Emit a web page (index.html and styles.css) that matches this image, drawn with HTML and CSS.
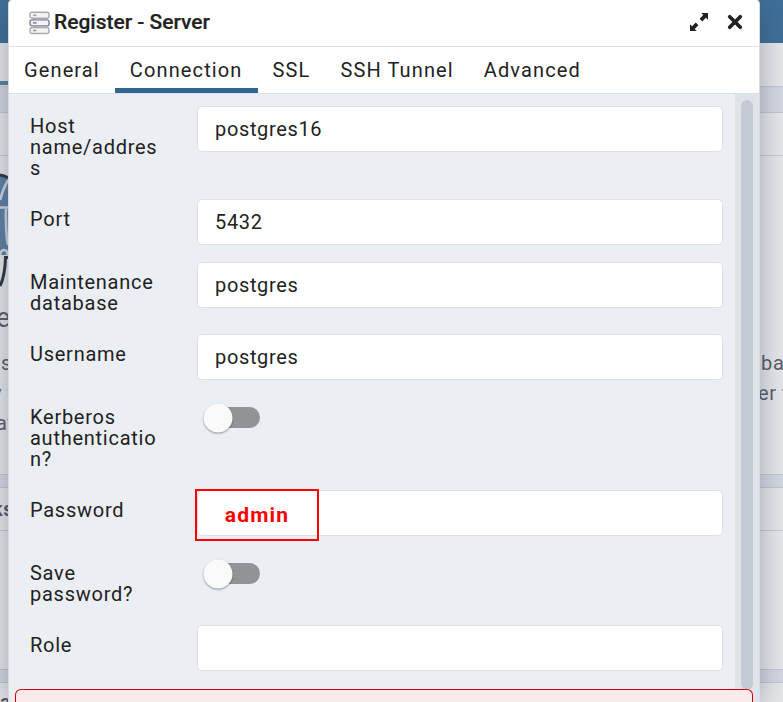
FILE: index.html
```
<!DOCTYPE html>
<html lang="en">
<head>
<meta charset="utf-8">
<title>Register - Server</title>
<link rel="stylesheet" href="styles.css">
</head>
<body>
<div class="page">
  <div class="topbar"></div>
  <div class="page-tabs"><span class="page-tab"></span></div>
  <div class="band band-tall"></div>
  <div class="panel-title"></div>
  <div class="panel welcome">
    <div class="side">
      <svg class="elephant" width="8" height="122" viewBox="0 0 8 122">
        <path d="M0 3Q5 3 8 6V82H0Z" fill="#5d81a3"/>
        <path d="M0 2Q5 2.500 8 5" fill="none" stroke="#30343e" stroke-width="3"/>
        <path d="M8 7Q3 16 0 27M0 34.500H8M6 36Q5.500 60 8 72M0 82Q1 77 4 77Q8 77 7 82" fill="none" stroke="#d0d6e2" stroke-width="2.600"/>
        <path d="M8 84.500H5.500Q5 103 0 113" fill="none" stroke="#30343e" stroke-width="3"/>
      </svg>
      <p class="big">e</p>
      <p class="copy">s</p>
      <p class="copy wide">y t</p>
      <p class="copy at">at</p>
    </div>
    <div class="side side-right">
      <p class="copy">ba</p>
      <p class="copy er">er t</p>
    </div>
  </div>
  <div class="band"></div>
  <div class="panel-title"><b class="ks">ks</b></div>
  <div class="panel links"></div>
  <div class="band"></div>
  <div class="panel-title last-title"><b class="last">a</b></div>
</div>

<div class="dialog">
  <header class="header">
    <svg class="server" width="22" height="24" viewBox="0 0 22 24">
      <g fill="#f3f3f3" stroke="#aaa" stroke-width="1.4">
        <rect x="1" y="1.2" width="19" height="6" rx="2"/>
        <rect x="1" y="16.5" width="19" height="6" rx="2"/>
        <rect x="1" y="8.9" width="19" height="6" rx="2" stroke="#7f7c9f"/>
      </g>
      <path d="M4 4.2h3.5M4 19.5h3.5" stroke="#999" stroke-width="1.3"/>
      <path d="M4 11.9h3.5" stroke="#68658c" stroke-width="1.3"/>
    </svg>
    <h1>Register - Server</h1>
    <svg class="expand" width="20" height="20" viewBox="0 0 20 20">
      <path d="M12.200 1H19V7.800L16.900 5.700L13.200 9.400L10.600 6.800L14.300 3.100ZM7.800 19H1V12.200L3.100 14.300L6.800 10.600L9.400 13.200L5.700 16.900Z" fill="#222"/>
    </svg>
    <svg class="close" width="16" height="16" viewBox="0 0 16 16"><path d="M2.7 2.7l10.6 10.6M13.3 2.7L2.7 13.3" stroke="#222" stroke-width="3.7" stroke-linecap="round"/></svg>
  </header>
  <nav class="tabs">
    <span class="tab">General</span>
    <span class="tab active">Connection</span>
    <span class="tab">SSL</span>
    <span class="tab">SSH Tunnel</span>
    <span class="tab">Advanced</span>
  </nav>
  <div class="body">
    <div class="form">
      <div class="row"><label>Host name/address</label><div class="field">postgres16</div></div>
      <div class="row"><label>Port</label><div class="field">5432</div></div>
      <div class="row"><label>Maintenance database</label><div class="field">postgres</div></div>
      <div class="row"><label>Username</label><div class="field">postgres</div></div>
      <div class="row"><label>Kerberos authentication?</label><div class="switch"><i></i></div></div>
      <div class="row"><label>Password</label><div class="field"><span class="mark">admin</span></div></div>
      <div class="row"><label>Save password?</label><div class="switch"><i></i></div></div>
      <div class="row"><label>Role</label><div class="field"></div></div>
    </div>
    <div class="scrollbar"><div class="thumb"></div></div>
  </div>
  <div class="alert"></div>
</div>
</body>
</html>
```
FILE: styles.css
```
* { box-sizing: border-box; }
html { height: 702px; overflow: hidden; }
body {
  margin: 0;
  height: 702px;
  overflow: hidden;
  position: relative;
  font: 20px/21px Roboto, sans-serif;
  letter-spacing: .65px;
  color: #222;
}
p, h1 { margin: 0; }

.page { height: 702px; overflow: hidden; background: #e6e8ea; }
.topbar { height: 43px; background: #3e7098; }
.page-tabs { height: 44px; border-bottom: 1px solid #c5c8d3; padding-top: 38px; }
.page-tab { display: block; width: 120px; height: 4px; background: #5682a5; }
.band { height: 14px; background: #d5d9e2; border: solid #c3c7d2; border-width: 1px 0; }
.band-tall { height: 26px; border-top: 0; }
.panel-title { height: 43px; border-bottom: 1px solid #c8ccd5; }
.last-title { height: 20px; border: 0; }
.panel { display: flex; justify-content: space-between; }
.welcome { height: 318px; }
.links { height: 138px; }
.side { width: 8px; color: #5a5e66; white-space: nowrap; }
.elephant { display: block; margin-top: 17px; }
.big { font-size: 27px; line-height: 46px; height: 53px; margin-left: -4px; }
.copy { line-height: 30px; height: 30px; margin-left: 1px; }
.copy.wide { margin-left: -8px; }
.copy.at { margin-left: -4px; }
.side-right { width: 23px; padding-top: 192px; }
.side-right .er { margin-left: -2px; }
.ks { display: block; margin-left: -8px; line-height: 42px; color: #555962; }
.last { display: block; line-height: 38px; color: #555962; }

.dialog {
  position: absolute;
  left: 8px;
  top: -1px;
  width: 752px;
  height: 703px;
  border: 1px solid #d8dbe3;
  border-bottom: 0;
  border-radius: 5px 5px 0 0;
  background: #ebeef3;
  background-clip: padding-box;
  box-shadow: 0 4px 30px rgba(50, 58, 82, .4);
}
.header {
  display: flex;
  align-items: center;
  height: 47px;
  padding: 0 16px 2px 20px;
  background: #fff;
  border-bottom: 1px solid #dde0e6;
  border-radius: 4px 4px 0 0;
}
.server { margin-top: 1px; }
h1 { font-size: 21px; font-weight: 500; letter-spacing: -.02px; margin-left: 3px; flex: 1; -webkit-text-stroke: .2px #222; }
.close { margin-left: 18px; }
.tabs { display: flex; height: 47px; background: #fff; border-bottom: 1px solid #dde0e6; }
.tab { padding: 13px 15px 0; border-bottom: 5px solid transparent; letter-spacing: 1.12px; }
.tab.active { border-color: #326690; }

.body { display: flex; height: 608px; overflow: hidden; }
.form { flex: 1; padding: 12px 12px 0 21px; }
.row { display: grid; grid-template-columns: 130px 526px; column-gap: 37px; align-items: start; margin-bottom: 17px; }
label { padding: 10px 0 3px; overflow-wrap: anywhere; letter-spacing: .74px; }
.field { height: 46px; padding: 12px 17px; background: #fff; border: 1px solid #dde0e6; border-radius: 5px; }
.mark {
  display: block;
  width: 124px;
  height: 52px;
  margin: -14px 0 0 -20px;
  border: 2px solid #f00;
  color: #f00;
  font-size: 21px;
  font-weight: 700;
  letter-spacing: 1.2px;
  line-height: 48px;
  text-align: center;
}
.switch { width: 56px; height: 21px; margin: 10px 0 0 7px; border-radius: 11px; background: #929397; }
.switch i {
  display: block;
  width: 29px;
  height: 29px;
  border-radius: 50%;
  background: #fafafa;
  transform: translate(-.5px, -3.5px);
  box-shadow: 0 1px 2px rgba(0, 0, 0, .4);
}
.scrollbar { width: 24px; padding: 6px; background: #e0e3ea; }
.thumb { width: 12px; height: 590px; border-radius: 6px; background: #c4cbd5; }
.alert {
  position: absolute;
  left: 6px;
  top: 689px;
  width: 738px;
  height: 14px;
  border: 1px solid #c00;
  border-bottom: 0;
  border-radius: 6px 6px 0 0;
  background: #faeaea;
}
```
